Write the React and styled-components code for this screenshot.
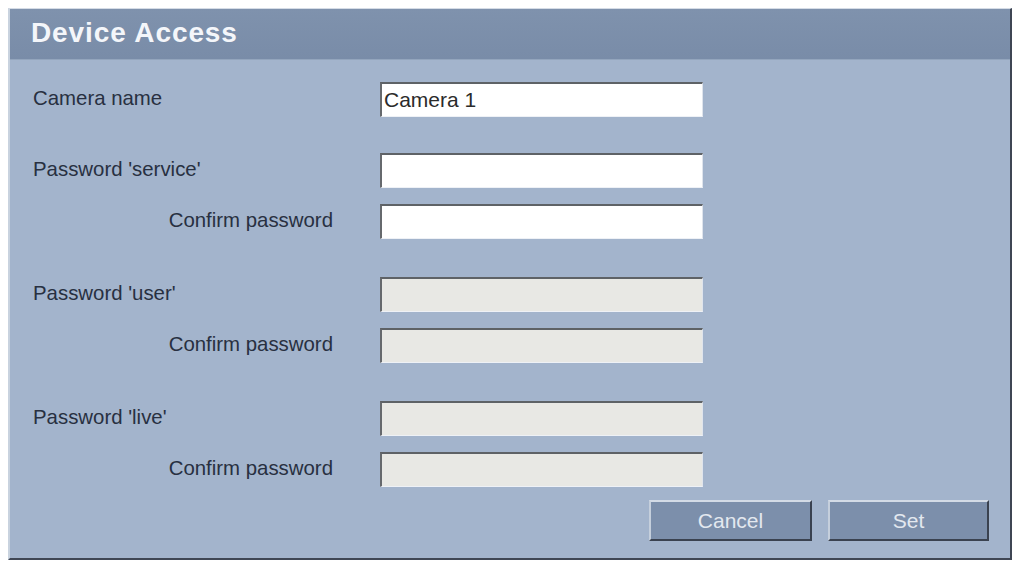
import React from "react";
import styled, { createGlobalStyle } from "styled-components";

const GlobalStyle = createGlobalStyle`
  html, body {
    margin: 0;
    padding: 0;
    background: #fff;
  }
  body {
    font-family: "Liberation Sans", Arial, sans-serif;
  }
`

const StyledPage = styled.div`
  padding: 8px 5px 2px 8px;
`

const StyledPanel = styled.div`
  background: #a3b4cc;
  border-left: 2px solid #c9d3df;
  border-top: 1px solid #d5dce6;
  border-right: 2px solid #3f4654;
  border-bottom: 2px solid #3f4654;
  box-sizing: border-box;
  display: flex;
  flex-direction: column;
  height: 552px;
  width: 1004px;
`

const StyledHeader = styled.div`
  align-items: center;
  background: linear-gradient(#7f92ad, #798ca8);
  border-bottom: 1px solid #93a5bd;
  box-sizing: border-box;
  color: #f4f6fa;
  display: flex;
  font-size: 28px;
  font-weight: bold;
  height: 51px;
  letter-spacing: 0.9px;
  padding-left: 21px;
  padding-bottom: 2px;
`

const StyledForm = styled.form`
  display: flex;
  flex-direction: column;
  padding: 22px 21px 0 23px;
`

const StyledRow = styled.div`
  align-items: center;
  display: flex;
  height: 35px;
  margin-top: ${(p) => p.gap || 0}px;
`

const StyledLabel = styled.label`
  box-sizing: border-box;
  color: #283041;
  flex: 0 0 347px;
  font-size: 20.4px;
  padding-bottom: 3px;
  padding-right: ${(p) => (p.indent ? 47 : 0)}px;
  text-align: ${(p) => (p.indent ? "right" : "left")};
`

const StyledInput = styled.input`
  background: ${(p) => (p.disabled ? "#e8e8e4" : "#fff")};
  border-top: 2px solid #5e6266;
  border-left: 2px solid #66696d;
  border-right: 1px solid #dfe4ec;
  border-bottom: 1px solid #eef1f6;
  box-sizing: border-box;
  color: #2b2b2b;
  font-family: "Liberation Sans", Arial, sans-serif;
  font-size: 21px;
  height: 35px;
  margin: 0;
  outline: none;
  padding: 0 2px 1px;
  width: 323px;
`

const StyledActions = styled.div`
  display: flex;
  gap: 16px;
  justify-content: flex-end;
  margin-top: 13px;
`

const StyledButton = styled.button`
  background: #7c8fab;
  border-top: 2px solid #d3dbe6;
  border-left: 2px solid #c5cfdc;
  border-right: 2px solid #3a4250;
  border-bottom: 2px solid #3a4250;
  box-sizing: border-box;
  color: #e3e8ef;
  cursor: pointer;
  font-family: "Liberation Sans", Arial, sans-serif;
  font-size: 21px;
  height: 41px;
  padding: 0;
  width: ${(p) => p.width}px;
`

const groups = [
  { label: "Password 'service'", disabled: false, gap: 36 },
  { label: "Password 'user'", disabled: true, gap: 38 },
  { label: "Password 'live'", disabled: true, gap: 38 },
];

const App = () => {
  return (
    <StyledPage>
      <GlobalStyle />
      <StyledPanel>
        <StyledHeader>Device Access</StyledHeader>
        <StyledForm onSubmit={(e) => e.preventDefault()}>
          <StyledRow>
            <StyledLabel>Camera name</StyledLabel>
            <StyledInput type="text" defaultValue="Camera 1" />
          </StyledRow>
          {groups.map((g) => (
            <React.Fragment key={g.label}>
              <StyledRow gap={g.gap}>
                <StyledLabel>{g.label}</StyledLabel>
                <StyledInput type="password" disabled={g.disabled} />
              </StyledRow>
              <StyledRow gap={16}>
                <StyledLabel indent>Confirm password</StyledLabel>
                <StyledInput type="password" disabled={g.disabled} />
              </StyledRow>
            </React.Fragment>
          ))}
          <StyledActions>
            <StyledButton type="button" width={163}>Cancel</StyledButton>
            <StyledButton type="submit" width={161}>Set</StyledButton>
          </StyledActions>
        </StyledForm>
      </StyledPanel>
    </StyledPage>
  )
};

export default App;
